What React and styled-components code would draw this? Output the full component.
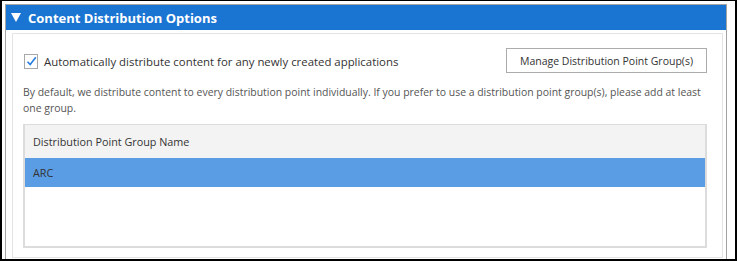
import styled, { createGlobalStyle } from 'styled-components'

const GlobalStyle = createGlobalStyle`
  html, body {
    margin: 0;
    padding: 0;
    background: #fff;
  }
  body {
    font-family: 'Segoe UI', 'Open Sans', sans-serif;
    color: #333;
  }
`

const Window = styled.div`
  box-sizing: border-box;
  width: 737px;
  height: 261px;
  border: 2px solid #000;
  border-top-width: 1px;
  padding: 3px 8px 0 3px;
  display: flex;
  overflow: hidden;
`

const Panel = styled.section`
  flex: 1;
  display: flex;
  flex-direction: column;
  border: 1px solid #a3a3a3;
  border-bottom: none;
`

const Header = styled.div`
  height: 25px;
  background: #1a74d2;
  color: #fff;
  display: flex;
  align-items: center;
  gap: 7px;
  padding-left: 5px;
  font-size: 13px;
  font-weight: 700;
`

const Arrow = styled.span`
  width: 0;
  height: 0;
  border-left: 5px solid transparent;
  border-right: 5px solid transparent;
  border-top: 9px solid #fff;
`

const Body = styled.div`
  flex: 1;
  display: flex;
  padding: 3px 3px 1px 6px;
`

const Inner = styled.div`
  flex: 1;
  border: 1px solid #e4e4e4;
  padding: 14px 15px 0 10px;
  display: flex;
  flex-direction: column;
`

const TopRow = styled.div`
  display: flex;
  align-items: center;
  justify-content: space-between;
`

const CheckLabel = styled.label`
  display: flex;
  align-items: center;
  gap: 6px;
  font-size: 11.4px;
  color: #333;
  margin-left: 1px;
  margin-top: 2px;
`

const Box = styled.span`
  box-sizing: border-box;
  width: 14px;
  height: 15px;
  border: 1px solid #a8a8a8;
  background: #fff;
  display: flex;
  align-items: center;
  justify-content: center;
`

const Button = styled.button`
  box-sizing: border-box;
  width: 201px;
  height: 25px;
  border: 1px solid #acacac;
  background: #fff;
  font-family: inherit;
  font-size: 10.5px;
  color: #333;
  padding: 0;
`

const Note = styled.p`
  margin: 11px 0 0 0;
  font-size: 10.45px;
  line-height: 16px;
  color: #555;
`

const Table = styled.div`
  margin-top: 8px;
  height: 121px;
  border: 2px solid #dcdcdc;
  border-top-width: 1px;
  background: #fff;
  display: flex;
  flex-direction: column;
`

const HeadCell = styled.div`
  height: 33px;
  background: #f3f3f3;
  display: flex;
  align-items: center;
  padding-left: 8px;
  font-size: 10.8px;
  color: #333;
`

const Row = styled.div`
  height: 29px;
  background: ${(p) => (p.selected ? '#5a9de4' : '#fff')};
  display: flex;
  align-items: center;
  padding-left: 8px;
  font-size: 10.8px;
  color: #333;
`

export default function App() {
  return (
    <>
      <GlobalStyle />
      <Window>
        <Panel>
          <Header>
            <Arrow />
            Content Distribution Options
          </Header>
          <Body>
            <Inner>
              <TopRow>
                <CheckLabel>
                  <Box>
                    <svg width="11" height="11" viewBox="0 0 11 11">
                      <path d="M1.5 5.8 L4.2 8.6 L9.8 1.2" fill="none" stroke="#2a7de0" strokeWidth="1.6" />
                    </svg>
                  </Box>
                  Automatically distribute content for any newly created applications
                </CheckLabel>
                <Button>Manage Distribution Point Group(s)</Button>
              </TopRow>
              <Note>
                By default, we distribute content to every distribution point individually. If you prefer to use a distribution point group(s), please add at least one group.
              </Note>
              <Table>
                <HeadCell>Distribution Point Group Name</HeadCell>
                <Row selected>ARC</Row>
              </Table>
            </Inner>
          </Body>
        </Panel>
      </Window>
    </>
  )
}
